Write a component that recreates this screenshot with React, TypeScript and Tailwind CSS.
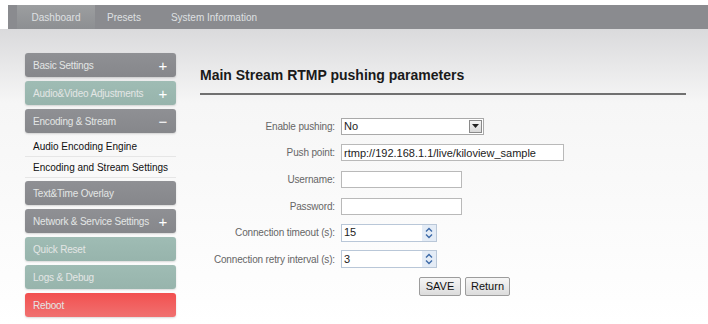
import { ReactNode } from 'react';

const font = { fontFamily: '"Liberation Sans", Arial, sans-serif' };

const MenuButton = ({
  label,
  tone,
  sign,
}: {
  label: string;
  tone: 'gray' | 'teal' | 'red';
  sign?: '+' | '−';
}) => {
  const bg =
    tone === 'gray'
      ? 'bg-gradient-to-b from-[#8f9094] to-[#86878b]'
      : tone === 'teal'
        ? 'bg-gradient-to-b from-[#9fbcb4] to-[#97b4ac]'
        : 'bg-gradient-to-b from-[#f24f4f] to-[#f07070]';
  return (
    <div
      className={`flex h-[24px] w-[151px] items-center justify-between rounded-[3px] pl-[8px] pr-[9px] text-[10px] tracking-[-0.2px] whitespace-nowrap text-[#e3e6e5] shadow-[0_1px_2px_rgba(0,0,0,0.15)] ${bg}`}
    >
      <span>{label}</span>
      {sign && <span className="text-[15px] leading-none text-white">{sign}</span>}
    </div>
  );
};

const Row = ({ label, children }: { label: string; children: ReactNode }) => (
  <div className="flex h-[26.6px] items-center">
    <div className="w-[141px] pr-[6px] text-right text-[10px] tracking-[-0.15px] whitespace-nowrap text-[#666]">
      {label}
    </div>
    {children}
  </div>
);

const TextBox = ({ w, value }: { w: string; value?: string }) => (
  <div
    className={`flex h-[17px] items-center border border-[#b9b9b9] bg-white px-[2px] text-[11px] text-[#222] ${w}`}
  >
    {value}
  </div>
);

const Spinner = ({ value }: { value: string }) => (
  <div className="flex h-[18px] w-[96px] items-center justify-between border border-[#b9c7d8] bg-white pl-[2px] text-[11px] text-[#222]">
    <span>{value}</span>
    <div className="flex h-full w-[14px] flex-col items-center justify-center bg-[#e4ecf6]">
      <svg width="8" height="12" viewBox="0 0 8 12" fill="none" stroke="#3d6aa8" strokeWidth="1.4">
        <path d="M1 4.5 L4 1.5 L7 4.5" />
        <path d="M1 7.5 L4 10.5 L7 7.5" />
      </svg>
    </div>
  </div>
);

const Button = ({ label, w }: { label: string; w: string }) => (
  <div
    className={`flex h-[19px] items-center justify-center rounded-[2px] border border-[#9c9c9c] bg-gradient-to-b from-[#f6f6f6] to-[#dcdcdc] text-[11px] text-[#111] ${w}`}
  >
    {label}
  </div>
);

export default function App() {
  return (
    <div className="h-[324px] w-[708px] overflow-hidden bg-white" style={font}>
      <div className="h-[5px]" />
      <div className="ml-[8px] flex h-[24px] items-stretch bg-[#8a8b8f] text-[10px] text-[#dfe0e2]">
        <div className="ml-[9px] flex w-[78px] items-center justify-center bg-gradient-to-b from-[#9c9ea0] to-[#8d8f92]">
          Dashboard
        </div>
        <div className="ml-[12px] flex items-center">Presets</div>
        <div className="ml-[30px] flex items-center">System Information</div>
      </div>
      <div className="flex h-[295px] bg-gradient-to-b from-[#dadadc] via-[#f6f6f6] via-[25%] to-white">
        <div className="ml-[25px] mt-[24px] flex w-[151px] flex-col">
          <div className="flex flex-col gap-[4px]">
            <MenuButton label="Basic Settings" tone="gray" sign="+" />
            <MenuButton label="Audio&Video Adjustments" tone="teal" sign="+" />
            <MenuButton label="Encoding & Stream" tone="gray" sign="−" />
          </div>
          <div className="flex h-[24px] items-end pb-[2px] border-b border-[#e6e6e6] pl-[8px] text-[10px] text-[#111]">
            Audio Encoding Engine
          </div>
          <div className="flex h-[21px] items-center border-b border-[#e6e6e6] pl-[8px] text-[10px] text-[#111]">
            Encoding and Stream Settings
          </div>
          <div className="mt-[3px] flex flex-col gap-[4px]">
            <MenuButton label="Text&Time Overlay" tone="gray" />
            <MenuButton label="Network & Service Settings" tone="gray" sign="+" />
            <MenuButton label="Quick Reset" tone="teal" />
            <MenuButton label="Logs & Debug" tone="teal" />
            <div>
              <MenuButton label="Reboot" tone="red" />
            </div>
          </div>
        </div>
        <div className="ml-[24px] flex w-[486px] flex-col">
          <div className="mt-[36px] text-[14px] font-bold text-[#1a1a1a]">
            Main Stream RTMP pushing parameters
          </div>
          <div className="mt-[7px] h-[2px] bg-[#707070]" />
          <div className="mt-[18px] flex flex-col">
            <Row label="Enable pushing:">
              <div className="flex h-[17px] w-[143px] items-center justify-between border border-[#a9a9a9] bg-white pl-[2px] pr-[1px] text-[11px] text-[#222]">
                <span>No</span>
                <div className="flex h-[13px] w-[13px] items-center justify-center border border-[#8a8a8a] bg-gradient-to-b from-[#f4f4f4] to-[#d8d8d8]">
                  <svg width="7" height="4" viewBox="0 0 7 4">
                    <path d="M0 0 H7 L3.5 4 Z" fill="#222" />
                  </svg>
                </div>
              </div>
            </Row>
            <Row label="Push point:">
              <TextBox w="w-[223px]" value="rtmp://192.168.1.1/live/kiloview_sample" />
            </Row>
            <Row label="Username:">
              <TextBox w="w-[121px]" />
            </Row>
            <Row label="Password:">
              <TextBox w="w-[121px]" />
            </Row>
            <Row label="Connection timeout (s):">
              <Spinner value="15" />
            </Row>
            <Row label="Connection retry interval (s):">
              <Spinner value="3" />
            </Row>
            <div className="mt-[4px] flex gap-[4px] pl-[219px]">
              <Button label="SAVE" w="w-[42px]" />
              <Button label="Return" w="w-[45px]" />
            </div>
          </div>
        </div>
      </div>
    </div>
  );
}
